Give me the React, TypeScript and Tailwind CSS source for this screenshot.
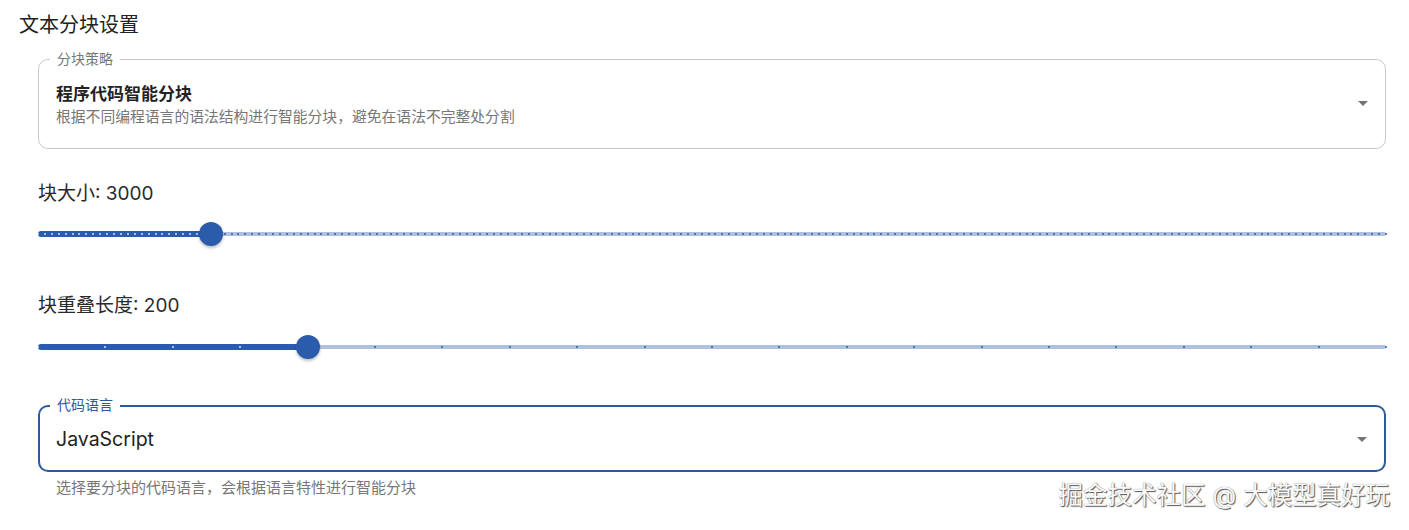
import React from "react"

interface StepSliderProps {
  min: number
  max: number
  step: number
  value: number
}

// Discrete slider: rail, filled track, a dot per step and the thumb on top
const StepSlider: React.FC<StepSliderProps> = ({ min, max, step, value }) => {
  const count = Math.round((max - min) / step)
  const pct = ((value - min) / (max - min)) * 100
  const marks = Array.from({ length: count + 1 }, (_, i) => (i / count) * 100)

  return (
    <div className="relative h-[28px] w-full">
      <div className="absolute left-0 right-0 top-1/2 h-[4px] -translate-y-1/2 rounded-full bg-[#aec1df]" />
      <div
        className="absolute left-0 top-1/2 h-[6px] -translate-y-1/2 rounded-full bg-[#2b5cab]"
        style={{ width: `${pct}%` }}
      />
      {marks.map((m, i) => (
        <span
          key={i}
          className={
            m <= pct
              ? "absolute top-1/2 h-[2px] w-[2px] -translate-x-1/2 -translate-y-1/2 rounded-[1px] bg-white/80"
              : "absolute top-1/2 h-[2px] w-[2px] -translate-x-1/2 -translate-y-1/2 rounded-[1px] bg-[#2b5cab]"
          }
          style={{ left: `${m}%` }}
        />
      ))}
      <span
        className="absolute top-1/2 h-[24px] w-[24px] -translate-x-1/2 -translate-y-1/2 rounded-full bg-[#2b5cab] shadow-[0_2px_3px_rgba(0,0,0,0.25)]"
        style={{ left: `${pct}%` }}
      />
    </div>
  )
}

const DropArrow = () => (
  <svg width="24" height="24" viewBox="0 0 24 24" className="shrink-0 fill-[#757575]">
    <path d="M7 10l5 5 5-5z" />
  </svg>
)

export default function App() {
  return (
    <div className="relative h-[530px] w-full overflow-hidden bg-white font-[Inter,'Noto_Sans_CJK_SC',sans-serif] text-[#1f1f1f]">
      <h2 className="mt-[9px] pl-[19px] text-[20px] leading-[32px] font-normal text-[#222]">文本分块设置</h2>

      <div className="pl-[38px] pr-[23px]">
        {/* strategy select */}
        <div className="relative mt-[18px] h-[90px] rounded-[10px] border border-[#c8c8c8]">
          <span className="absolute -top-[10px] left-[11px] bg-white px-[7px] text-[14px] leading-[18px] text-[#777]">
            分块策略
          </span>
          <div className="flex h-full items-start justify-between pl-[17px] pr-[10px] pt-[22px]">
            <div className="flex flex-col">
              <span className="text-[17px] leading-[24px] font-semibold text-[#222]">程序代码智能分块</span>
              <span className="text-[14.8px] leading-[22px] text-[#777]">
                根据不同编程语言的语法结构进行智能分块，避免在语法不完整处分割
              </span>
            </div>
            <div className="pt-[9px]">
              <DropArrow />
            </div>
          </div>
        </div>

        <div className="mt-[31px] text-[19px] leading-[28px] text-[#2a2a2a]">块大小: 3000</div>
        <div className="mt-[12px]">
          <StepSlider min={500} max={20000} step={100} value={3000} />
        </div>

        <div className="mt-[44px] text-[19px] leading-[28px] text-[#2a2a2a]">块重叠长度: 200</div>
        <div className="mt-[13px]">
          <StepSlider min={0} max={1000} step={50} value={200} />
        </div>

        {/* language select, focused */}
        <div className="relative mt-[44px] h-[67px] rounded-[10px] border-2 border-[#2d5a9c]">
          <span className="absolute -top-[11px] left-[10px] bg-white px-[7px] text-[14px] leading-[18px] text-[#2d5a9c]">
            代码语言
          </span>
          <div className="flex h-full items-center justify-between pl-[16px] pr-[10px]">
            <span className="text-[19.5px] leading-[28px] text-[#222]">JavaScript</span>
            <DropArrow />
          </div>
        </div>
        <p className="mt-[6px] pl-[18px] text-[15px] leading-[20px] text-[#777]">
          选择要分块的代码语言，会根据语言特性进行智能分块
        </p>
      </div>

      <div className="absolute bottom-[20px] right-[19px] text-[24.5px] leading-[30px] text-[#fafafa] [text-shadow:1px_1px_1px_#555,0_0_1px_#777]">
        掘金技术社区 @ 大模型真好玩
      </div>
    </div>
  )
}
